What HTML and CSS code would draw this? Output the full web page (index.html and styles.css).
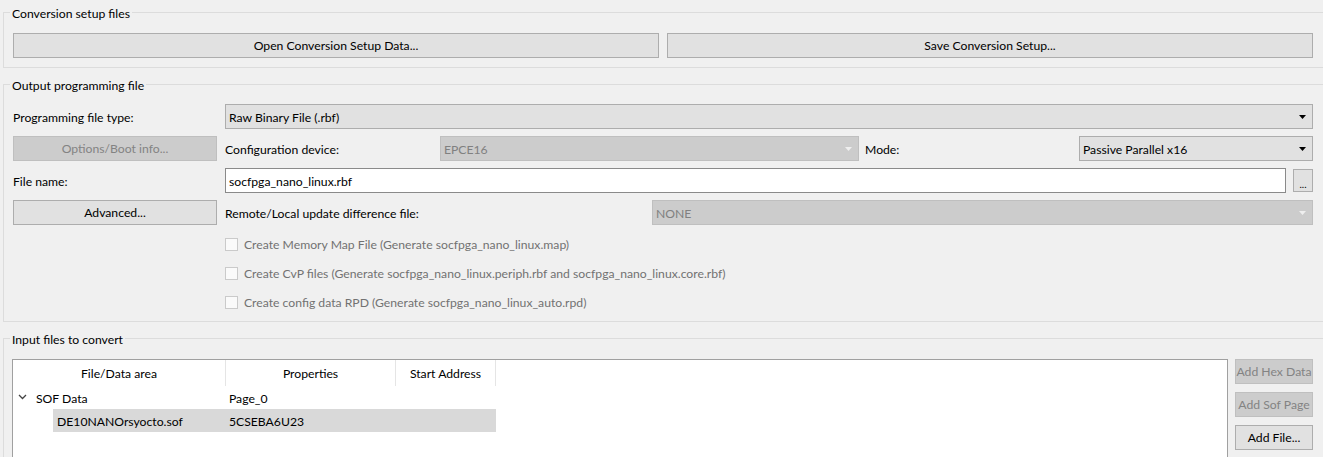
FILE: index.html
```html
<!DOCTYPE html>
<html>
<head>
<meta charset="utf-8">
<link rel="stylesheet" href="styles.css">
</head>
<body>
<fieldset class="group g1">
  <legend>Conversion setup files</legend>
  <div class="setup-row">
    <button class="btn grow">Open Conversion Setup Data...</button>
    <button class="btn grow">Save Conversion Setup...</button>
  </div>
</fieldset>

<fieldset class="group g2">
  <legend>Output programming file</legend>
  <div class="form">
    <div class="row">
      <span class="lead label">Programming file type:</span>
      <div class="combo grow"><span>Raw Binary File (.rbf)</span><svg class="arrow" width="7" height="4" viewBox="0 0 7 4"><path d="M0 0h7L3.5 4z"/></svg></div>
    </div>
    <div class="row">
      <button class="btn lead disabled">Options/Boot info...</button>
      <span class="label w-config">Configuration device:</span>
      <div class="combo disabled w-device"><span>EPCE16</span><svg class="arrow" width="7" height="4" viewBox="0 0 7 4"><path d="M0 0h7L3.5 4z"/></svg></div>
      <span class="label w-mode">Mode:</span>
      <div class="combo grow"><span>Passive Parallel x16</span><svg class="arrow" width="7" height="4" viewBox="0 0 7 4"><path d="M0 0h7L3.5 4z"/></svg></div>
    </div>
    <div class="row">
      <span class="lead label">File name:</span>
      <div class="input grow">socfpga_nano_linux.rbf</div>
      <button class="btn dots">...</button>
    </div>
    <div class="row">
      <button class="btn lead">Advanced...</button>
      <span class="label w-remote">Remote/Local update difference file:</span>
      <div class="combo disabled grow"><span>NONE</span><svg class="arrow" width="7" height="4" viewBox="0 0 7 4"><path d="M0 0h7L3.5 4z"/></svg></div>
    </div>
    <div class="checks">
      <label class="check"><span class="box"></span>Create Memory Map File (Generate socfpga_nano_linux.map)</label>
      <label class="check"><span class="box"></span>Create CvP files (Generate socfpga_nano_linux.periph.rbf and socfpga_nano_linux.core.rbf)</label>
      <label class="check"><span class="box"></span>Create config data RPD (Generate socfpga_nano_linux_auto.rpd)</label>
    </div>
  </div>
</fieldset>

<fieldset class="group g3">
  <legend>Input files to convert</legend>
  <div class="input-area">
    <div class="tree">
      <div class="thead">
        <div class="th c1">File/Data area</div>
        <div class="th c2">Properties</div>
        <div class="th c3">Start Address</div>
      </div>
      <div class="tr">
        <div class="td c1 parent"><svg class="chev" width="9" height="6" viewBox="0 0 9 6"><path d="M1 1l3.5 3.5L8 1" fill="none" stroke="#444" stroke-width="1.3"/></svg>SOF Data</div>
        <div class="td c2">Page_0</div>
        <div class="td c3"></div>
      </div>
      <div class="tr selected">
        <div class="td c1 child">DE10NANOrsyocto.sof</div>
        <div class="td c2">5CSEBA6U23</div>
        <div class="td c3"></div>
      </div>
    </div>
    <div class="side">
      <button class="btn side-btn disabled">Add Hex Data</button>
      <button class="btn side-btn disabled">Add Sof Page</button>
      <button class="btn side-btn">Add File...</button>
    </div>
  </div>
</fieldset>
</body>
</html>
```

FILE: styles.css
```css
html, body {
  margin: 0;
  background: #f0f0f0;
}
body {
  padding-top: 2px;
  overflow: hidden;
  font-family: "Lato", "Noto Sans", sans-serif;
  font-size: 12.2px;
  color: #000;
}

.group {
  margin: 0 -3px 0 3px;
  padding: 11px 12px 9px 9px;
  border: 1px solid #dcdcdc;
  min-width: 0;
}
.group legend {
  padding: 4px 2px 0;
  margin-left: -3px;
  line-height: 16px;
}
.g2, .g3 {
  margin-top: 6px;
}
.g2 {
  padding-top: 10px;
  padding-bottom: 4px;
}
.g3 {
  padding-bottom: 0;
}

.btn {
  height: 25px;
  border: 1px solid #adadad;
  background: #e1e1e1;
  font: inherit;
  color: #000;
  padding: 0;
  box-sizing: border-box;
}
.btn.disabled {
  background: #cccccc;
  border-color: #bfbfbf;
  color: #838383;
}
.grow {
  flex: 1;
  min-width: 0;
}

.setup-row {
  display: flex;
  gap: 8px;
}

.form {
  display: flex;
  flex-direction: column;
  gap: 7px;
}
.row {
  display: flex;
  align-items: center;
  height: 25px;
}
.lead {
  width: 204px;
  margin-right: 8px;
  flex: none;
}
.label {
  white-space: nowrap;
  padding-top: 1px;
}
.w-config { width: 215px; flex: none; }
.w-device { width: 419px; flex: none; margin-right: 6px; }
.w-mode { width: 214px; flex: none; }
.w-remote { width: 427px; flex: none; }

.combo {
  height: 25px;
  box-sizing: border-box;
  border: 1px solid #adadad;
  background: #e1e1e1;
  display: flex;
  align-items: center;
  padding: 0 6px 0 3px;
}
.combo span {
  flex: 1;
  white-space: nowrap;
  padding-top: 1px;
}
.combo .arrow {
  fill: #000;
  flex: none;
}
.combo.disabled {
  background: #cccccc;
  border-color: #bfbfbf;
  color: #808080;
}
.combo.disabled .arrow {
  fill: #efefef;
}

.input {
  height: 25px;
  box-sizing: border-box;
  border: 1px solid #8a8a8a;
  background: #fff;
  display: flex;
  align-items: center;
  padding: 1px 0 0 3px;
  margin-right: 7px;
}
.dots {
  width: 20px;
  height: 23px;
  flex: none;
  font-size: 10px;
  line-height: 1;
  padding-top: 6px;
}

.checks {
  margin-top: -2px;
  margin-left: 212px;
  display: flex;
  flex-direction: column;
}
.check {
  height: 29px;
  display: flex;
  align-items: center;
  gap: 6px;
  color: #727272;
}
.box {
  width: 13px;
  height: 13px;
  box-sizing: border-box;
  border: 1px solid #cacaca;
  background: #fafafa;
}

.input-area {
  display: flex;
  gap: 7px;
}
.tree {
  flex: 1;
  margin-left: -1px;
  height: 110px;
  border: 1px solid #a0a0a0;
  background: #fff;
}
.thead {
  display: flex;
  height: 26px;
}
.th {
  box-sizing: border-box;
  border-right: 1px solid #e5e5e5;
  display: flex;
  align-items: center;
  justify-content: center;
}
.c1 { width: 213px; flex: none; box-sizing: border-box; }
.c2 { width: 170px; flex: none; box-sizing: border-box; }
.c3 { width: 100px; flex: none; box-sizing: border-box; }

.tr {
  display: flex;
  align-items: center;
  height: 23px;
}
.td {
  display: flex;
  align-items: center;
  height: 100%;
  white-space: nowrap;
  padding-top: 2px;
}
.td.c2 {
  padding-left: 3px;
}
.parent {
  padding-left: 5px;
}
.chev {
  margin-right: 9px;
  margin-top: -3px;
}
.selected .td {
  background: #d9d9d9;
  padding-top: 1px;
}
.child {
  margin-left: 40px;
  width: 173px;
  padding-left: 4px;
}

.side {
  width: 78px;
  display: flex;
  flex-direction: column;
  gap: 8px;
}
.side-btn {
  width: 78px;
}
```
